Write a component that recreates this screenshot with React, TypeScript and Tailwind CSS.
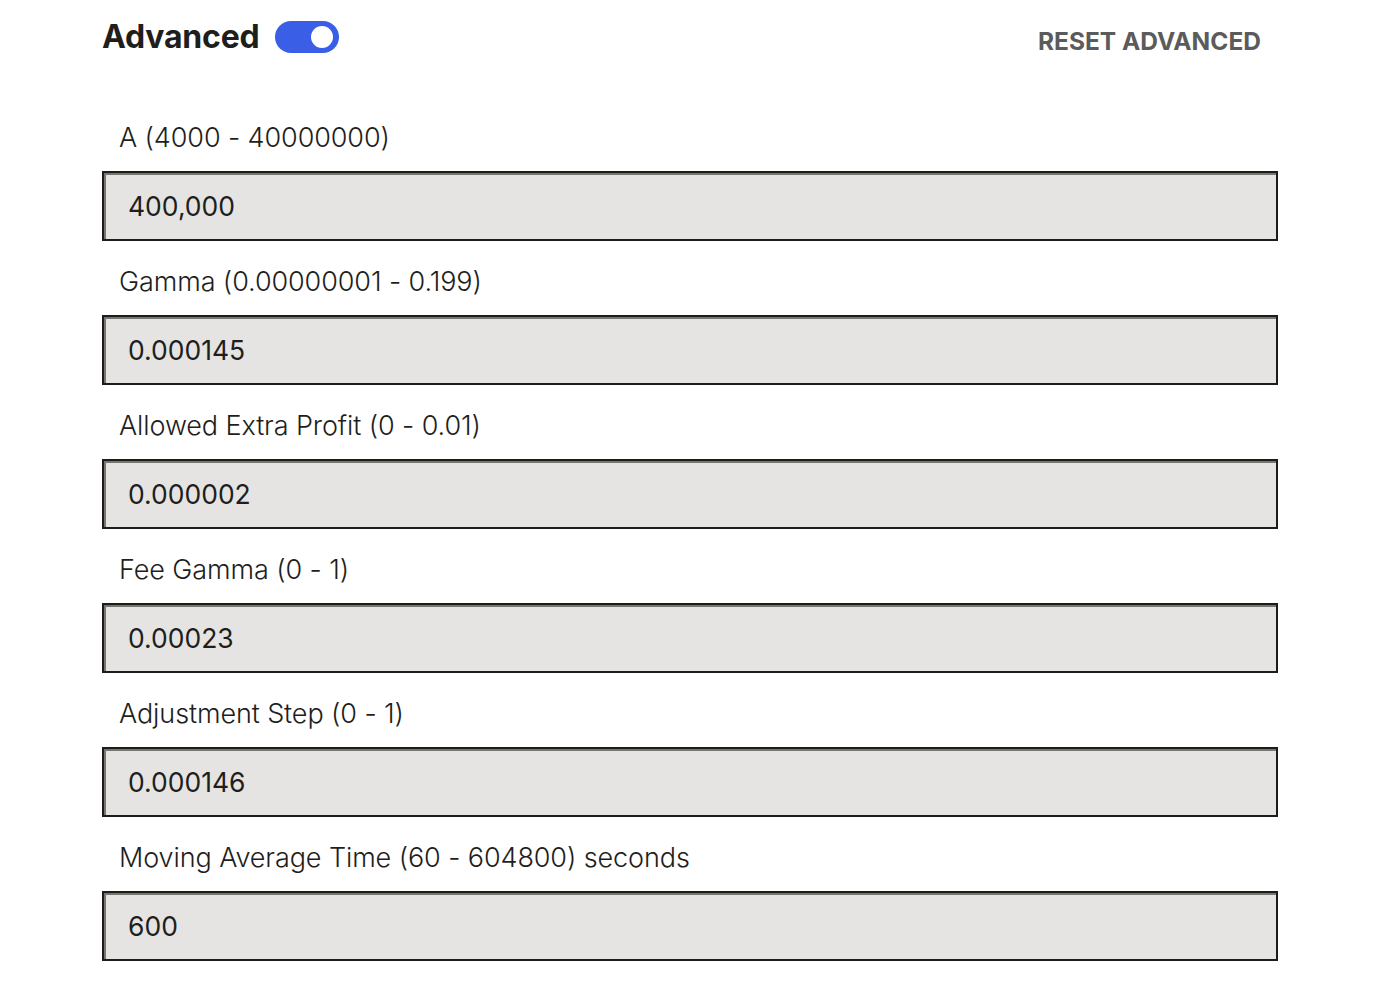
import { useState } from 'react';

const fields = [
  { label: 'A (4000 - 40000000)', value: '400,000' },
  { label: 'Gamma (0.00000001 - 0.199)', value: '0.000145' },
  { label: 'Allowed Extra Profit (0 - 0.01)', value: '0.000002' },
  { label: 'Fee Gamma (0 - 1)', value: '0.00023' },
  { label: 'Adjustment Step (0 - 1)', value: '0.000146' },
  { label: 'Moving Average Time (60 - 604800) seconds', value: '600' },
];

export default function App() {
  const [values, setValues] = useState(fields.map((f) => f.value));

  return (
    <div className="min-h-screen bg-white pl-[102px] pr-[104px] pt-[17px] font-['Inter',sans-serif] text-[#1e1e1c]">
      {/* Header */}
      <div className="flex h-[40px] items-center justify-between pr-[17px]">
        <div className="flex items-center gap-[15px]">
          <h2 className="text-[32px] font-bold tracking-[-0.2px] leading-[40px]">Advanced</h2>
          <button className="relative h-[32px] w-[64px] rounded-full bg-[#3a5fe6]">
            <span className="absolute right-[6px] top-[5px] h-[22px] w-[22px] rounded-full bg-white" />
          </button>
        </div>
        <button className="mt-[8px] text-[24.5px] font-bold text-[#5b5b5b]">RESET ADVANCED</button>
      </div>

      {/* Fields */}
      <div className="mt-[64px] flex flex-col">
        {fields.map((f, i) => (
          <div key={f.label} className="flex flex-col">
            <label className="pl-[17px] text-[27px] font-[350] leading-[34px] tracking-[-0.1px] mb-[16px]">{f.label}</label>
            <input
              value={values[i]}
              onChange={(e) => setValues(values.map((v, j) => (j === i ? e.target.value : v)))}
              className="h-[70px] w-full border-2 border-[#1c1c1a] bg-[#e5e4e2] pl-[24px] text-[26.5px] text-[#1e1e1c] shadow-[inset_2px_2px_0_#76756f] outline-none mb-[24px]"
            />
          </div>
        ))}
      </div>
    </div>
  );
}
